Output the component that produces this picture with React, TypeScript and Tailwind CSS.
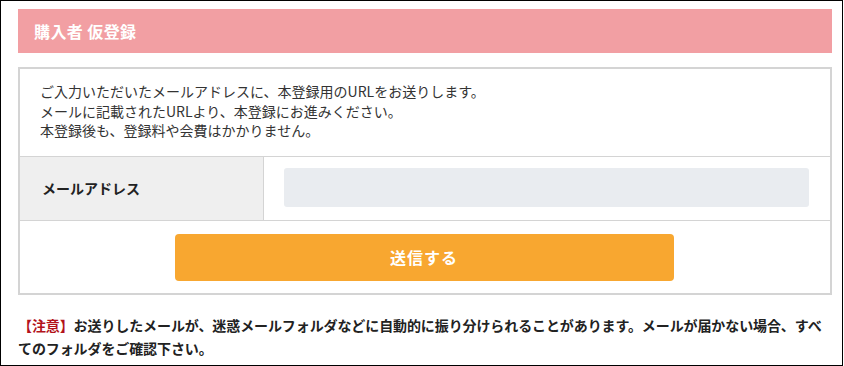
export default function App() {
  return (
    <div
      className="w-[843px] h-[366px] border border-black bg-white overflow-hidden"
      style={{ fontFamily: '"Noto Sans CJK JP", "Noto Sans", sans-serif' }}
    >
      <div className="pl-[17px] pt-[8px] w-[831px]">
        <div className="h-[44px] bg-[#f29fa3] flex items-center pl-4">
          <h1 className="text-white font-bold text-[16px] tracking-[0.4px]">購入者 仮登録</h1>
        </div>

        <div className="mt-[14px] border-2 border-[#d4d4d4]">
          <div className="pl-5 pt-[13px] pb-[15px] text-[14px] leading-[19.5px] text-[#333]">
            <p>ご入力いただいたメールアドレスに、本登録用のURLをお送りします。</p>
            <p>メールに記載されたURLより、本登録にお進みください。</p>
            <p>本登録後も、登録料や会費はかかりません。</p>
          </div>

          <div className="flex border-t border-[#d4d4d4] h-[64px]">
            <div className="w-[244px] bg-[#efefef] border-r border-[#d4d4d4] flex items-center pl-[22px]">
              <span className="text-[14px] font-bold text-[#222]">メールアドレス</span>
            </div>
            <div className="flex-1 pl-5 pr-[21px] pt-[11px]">
              <input
                type="text"
                className="w-full h-[39px] bg-[#e9ecf0] rounded-[3px] outline-none px-3 text-sm"
              />
            </div>
          </div>

          <div className="border-t border-[#d4d4d4] flex justify-center pt-[13px] pb-[12px] pr-[2px]">
            <button className="w-[499px] h-[47px] bg-[#f8a730] rounded-[4px] text-white font-bold text-[16px] tracking-[1px]">
              送信する
            </button>
          </div>
        </div>

        <p className="mt-[19px] text-[14px] leading-[23px] font-bold text-[#222] tracking-[-0.1px]">
          <span className="text-[#b3131b]">【注意】</span>お送りしたメールが、迷惑メールフォルダなどに自動的に振り分けられることがあります。メールが届かない場合、すべてのフォルダをご確認下さい。
        </p>
      </div>
    </div>
  );
}
